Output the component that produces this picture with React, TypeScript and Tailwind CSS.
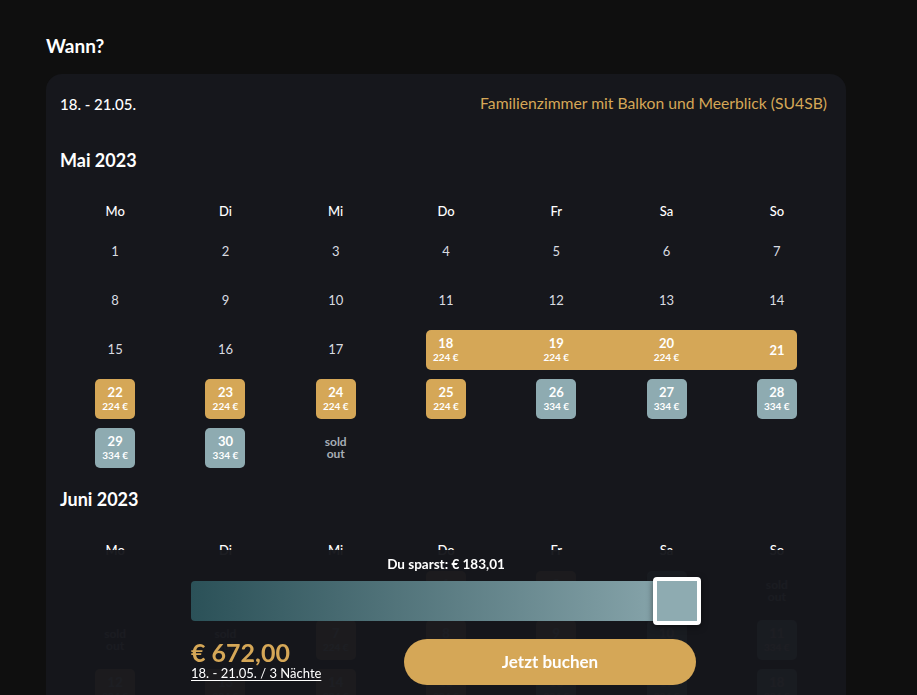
import React from 'react';

type Cell =
  | { kind: 'empty' }
  | { kind: 'plain'; day: number }
  | { kind: 'sold' }
  | { kind: 'box'; day: number; price: string; tone: 'gold' | 'gray' };

const WEEKDAYS = ['Mo', 'Di', 'Mi', 'Do', 'Fr', 'Sa', 'So'];

const gold = (day: number): Cell => ({ kind: 'box', day, price: '224 €', tone: 'gold' });
const gray = (day: number): Cell => ({ kind: 'box', day, price: '334 €', tone: 'gray' });
const plain = (day: number): Cell => ({ kind: 'plain', day });
const empty: Cell = { kind: 'empty' };
const sold: Cell = { kind: 'sold' };

const juneRows: Cell[][] = [
  [empty, empty, empty, gold(1), gold(2), gray(3), sold],
  [sold, sold, gold(7), gold(8), gold(9), gray(10), gray(11)],
  [gold(12), gold(13), gold(14), gold(15), gray(16), gray(17), gray(18)],
];

function DayCell({ cell }: { cell: Cell }) {
  if (cell.kind === 'empty') return <div className="h-10" />;
  if (cell.kind === 'plain')
    return (
      <div className="h-10 flex items-center justify-center text-[13px] text-[#d9dce1]">{cell.day}</div>
    );
  if (cell.kind === 'sold')
    return (
      <div className="h-10 flex flex-col items-center justify-center text-[12px] font-bold leading-[12px] text-[#a7aeb6]">
        <span>sold</span>
        <span>out</span>
      </div>
    );
  return (
    <div className="h-10 flex justify-center">
      <div
        className={
          'w-10 h-10 rounded-[5px] flex flex-col items-center justify-center text-white font-bold ' +
          (cell.tone === 'gold' ? 'bg-[#d5a757]' : 'bg-[#8eabb1]')
        }
      >
        <span className="text-[13px] leading-[14px]">{cell.day}</span>
        <span className="text-[10px] leading-[14px]">{cell.price}</span>
      </div>
    </div>
  );
}

function WeekdayRow() {
  return (
    <div className="grid grid-cols-7 h-5 items-center text-[13px] text-white font-medium">
      {WEEKDAYS.map((d) => (
        <div key={d} className="text-center pt-[2px]">
          {d}
        </div>
      ))}
    </div>
  );
}

function Row({ cells }: { cells: Cell[] }) {
  return (
    <div className="grid grid-cols-7">
      {cells.map((c, i) => (
        <DayCell key={i} cell={c} />
      ))}
    </div>
  );
}

function RangeBar() {
  const days = [
    { day: 18, price: '224 €' },
    { day: 19, price: '224 €' },
    { day: 20, price: '224 €' },
    { day: 21, price: '' },
  ];
  return (
    <div className="col-span-4 px-[35px]">
      <div className="h-10 bg-[#d5a757] rounded-[5px] flex justify-between">
        {days.map((d) => (
          <div key={d.day} className="w-10 flex flex-col items-center justify-center text-white font-bold">
            <span className="text-[13px] leading-[14px]">{d.day}</span>
            {d.price && <span className="text-[10px] leading-[14px]">{d.price}</span>}
          </div>
        ))}
      </div>
    </div>
  );
}

export default function App() {
  return (
    <div className="h-[695px] overflow-hidden bg-[#0f0f0f] text-white font-['Lato',sans-serif]">
      <div className="pl-[46px] pt-[34px]">
        <h2 className="text-[19px] font-bold leading-6">Wann?</h2>

        <div className="mt-4 w-[800px] rounded-2xl bg-[#16171c] px-[14px] pt-5 pb-10">
          <div className="flex justify-between items-center h-5">
            <span className="text-white text-[15px] font-medium">18. - 21.05.</span>
            <span className="text-[#d5a757] text-[15.7px] pr-[5px]">Familienzimmer mit Balkon und Meerblick (SU4SB)</span>
          </div>

          <h3 className="mt-[34px] text-[18px] font-bold leading-6">Mai 2023</h3>
          <div className="mt-7">
            <WeekdayRow />
          </div>
          <div className="mt-3 flex flex-col gap-[9px]">
            <Row cells={[1, 2, 3, 4, 5, 6, 7].map(plain)} />
            <Row cells={[8, 9, 10, 11, 12, 13, 14].map(plain)} />
            <div className="grid grid-cols-7">
              <DayCell cell={plain(15)} />
              <DayCell cell={plain(16)} />
              <DayCell cell={plain(17)} />
              <RangeBar />
            </div>
            <Row cells={[gold(22), gold(23), gold(24), gold(25), gray(26), gray(27), gray(28)]} />
            <Row cells={[gray(29), gray(30), sold, empty, empty, empty, empty]} />
          </div>

          <h3 className="mt-[19px] text-[18px] font-bold leading-6">Juni 2023</h3>
          <div className="mt-7">
            <WeekdayRow />
          </div>
          <div className="mt-3 flex flex-col gap-[9px]">
            {juneRows.map((r, i) => (
              <Row key={i} cells={r} />
            ))}
          </div>
        </div>
      </div>

      <div className="fixed bottom-0 left-[46px] w-[800px] h-[145px] bg-[#16171c]/[0.97] pt-[6px] pb-[10px] flex flex-col items-center">
        <div className="w-[510px] flex flex-col">
          <div className="h-4 text-center text-[13.5px] font-bold leading-4 text-white">Du sparst: € 183,01</div>
          <div className="relative mt-[5px] h-12 flex items-center">
            <div className="h-10 w-full rounded-[4px] bg-gradient-to-r from-[#2b5158] to-[#8eabb1]" />
            <div className="absolute right-0 top-0 w-12 h-12 rounded-[4px] border-4 border-white bg-[#8eabb1] shadow-[0_2px_6px_rgba(0,0,0,0.5)]" />
          </div>
          <div className="mt-[14px] flex justify-between items-start">
            <div className="flex flex-col">
              <span className="text-[25px] leading-[26px] font-bold text-[#d5a757]">€ 672,00</span>
              <span className="text-[13px] leading-4 text-white underline underline-offset-2">
                18. - 21.05. / 3 Nächte
              </span>
            </div>
            <button className="mr-[5px] w-[292px] h-[46px] rounded-full bg-[#d5a757] text-white text-[17px] font-bold">
              Jetzt buchen
            </button>
          </div>
        </div>
      </div>
    </div>
  );
}
